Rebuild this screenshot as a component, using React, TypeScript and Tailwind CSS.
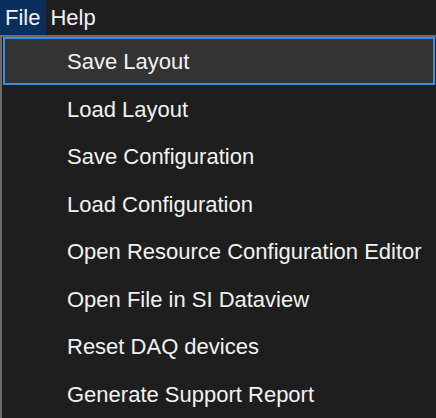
import React from "react";

const items = [
  "Save Layout",
  "Load Layout",
  "Save Configuration",
  "Load Configuration",
  "Open Resource Configuration Editor",
  "Open File in SI Dataview",
  "Reset DAQ devices",
  "Generate Support Report",
];

export default function App() {
  return (
    <div
      className="w-[436px] h-[418px] bg-[#1e1e1e] text-[#f2f2f2] overflow-hidden"
      style={{ fontFamily: '"Liberation Sans", Arial, sans-serif' }}
    >
      <div className="h-[35px] flex items-stretch text-[22px] leading-none bg-[#1f1f1f]">
        <div className="bg-[#0a2f5c] pl-[5px] pr-[6px] flex items-center">File</div>
        <div className="pl-[4px] pr-[6px] flex items-center">Help</div>
      </div>
      <div className="border-l-2 border-t-2 border-[#6b6b6b] h-[383px] pt-0">
        {items.map((t, i) => (
          <div
            key={t}
            className={
              i === 0
                ? "ml-[1px] mr-[1px] h-[48px] border-2 border-[#3b8fe3] bg-[#333333] flex items-center pl-[62px] pt-[2px] text-[22px] leading-none"
                : "ml-[1px] mr-[1px] h-[47.5px] border-2 border-transparent flex items-center pl-[62px] pt-[2px] text-[22px] leading-none"
            }
          >
            {t}
          </div>
        ))}
      </div>
    </div>
  );
}
